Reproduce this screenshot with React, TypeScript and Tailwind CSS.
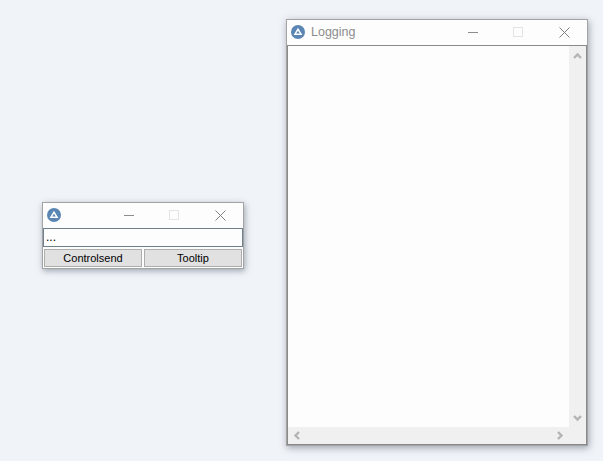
import React from "react"

const font = { fontFamily: '"Liberation Sans", Arial, sans-serif' }

const AppIcon: React.FC = () => {
  return (
    <svg width="14" height="14" viewBox="0 0 14 14" className="shrink-0">
      <circle cx="7" cy="7" r="7" fill="#5b86b3" />
      <path d="M7 2.8 L11.4 10 L2.6 10 Z" fill="#ffffff" />
      <path d="M7 5.8 L8.8 8.6 L5.2 8.6 Z" fill="#5b86b3" />
    </svg>
  )
}

const CaptionButtons: React.FC = () => {
  return (
    <div className="flex items-center">
      <div className="w-[45px]">
        <div className="w-[10px] h-px bg-[#8c8c8c]" />
      </div>
      <div className="w-[46px]">
        <div className="w-[10px] h-[10px] border border-[#e4e4e4]" />
      </div>
      <svg width="11" height="11" viewBox="0 0 11 11">
        <path d="M0.5 0.5 L10.5 10.5 M10.5 0.5 L0.5 10.5" stroke="#7f7f7f" strokeWidth="1" fill="none" />
      </svg>
    </div>
  )
}

const Chevron: React.FC<{ d: string }> = ({ d }) => {
  return (
    <svg width="9" height="9" viewBox="0 0 9 9">
      <path d={d} stroke="#b4b4b4" strokeWidth="2.4" fill="none" />
    </svg>
  )
}

const ControlWindow: React.FC = () => {
  return (
    <div className="absolute left-[42px] top-[202px] w-[202px] h-[67px] flex flex-col bg-[#fdfdfd] border border-[#a3a3a3] shadow-[1px_2px_6px_rgba(90,100,115,0.55)]">
      <div className="h-[25px] flex items-center pl-[4px] pr-[17px] pb-px justify-between">
        <AppIcon />
        <div className="flex-1 flex justify-end">
          <CaptionButtons />
        </div>
      </div>
      <div className="h-[19px] border border-[#6e7f8d] bg-[#fdfdfd] text-[12px] leading-[17px] pl-[2px] text-black">
        ...
      </div>
      <div className="flex gap-[2px] mx-px mt-[2px]">
        <button className="w-[98px] h-[18px] bg-[#e1e1e1] border border-[#adadad] text-[11px] leading-[14px] text-black">
          Controlsend
        </button>
        <button className="w-[98px] h-[18px] bg-[#e1e1e1] border border-[#adadad] text-[11px] leading-[14px] text-black">
          Tooltip
        </button>
      </div>
    </div>
  )
}

const LoggingWindow: React.FC = () => {
  return (
    <div className="absolute left-[286px] top-[19px] w-[302px] h-[427px] flex flex-col bg-[#fdfdfd] border border-[#a3a3a3] shadow-[1px_2px_7px_rgba(90,100,115,0.55)]">
      <div className="h-[25px] flex items-center pl-[4px] pr-[17px] pb-px">
        <AppIcon />
        <span className="ml-[6px] text-[12.5px] text-[#8c8c8c]">Logging</span>
        <div className="flex-1 flex justify-end">
          <CaptionButtons />
        </div>
      </div>
      <div className="flex-1 flex flex-col border-t border-l border-r border-b border-[#8a8a8a] min-h-0">
        <div className="flex-1 flex min-h-0">
          <div className="flex-1 bg-[#fdfdfd]" />
          <div className="w-[17px] bg-[#f0f0f0] flex flex-col items-center justify-between pt-[6px] pb-[5px]">
            <Chevron d="M1 6 L4.5 2.5 L8 6" />
            <Chevron d="M1 3 L4.5 6.5 L8 3" />
          </div>
        </div>
        <div className="h-[17px] bg-[#f0f0f0] flex items-center justify-between pl-[5px] pr-[22px] pb-px">
          <Chevron d="M6 1 L2.5 4.5 L6 8" />
          <Chevron d="M3 1 L6.5 4.5 L3 8" />
        </div>
      </div>
    </div>
  )
}

export default function App() {
  return (
    <div className="relative w-[603px] h-[461px] overflow-hidden bg-[#f0f3f8]" style={font}>
      <ControlWindow />
      <LoggingWindow />
    </div>
  )
}
